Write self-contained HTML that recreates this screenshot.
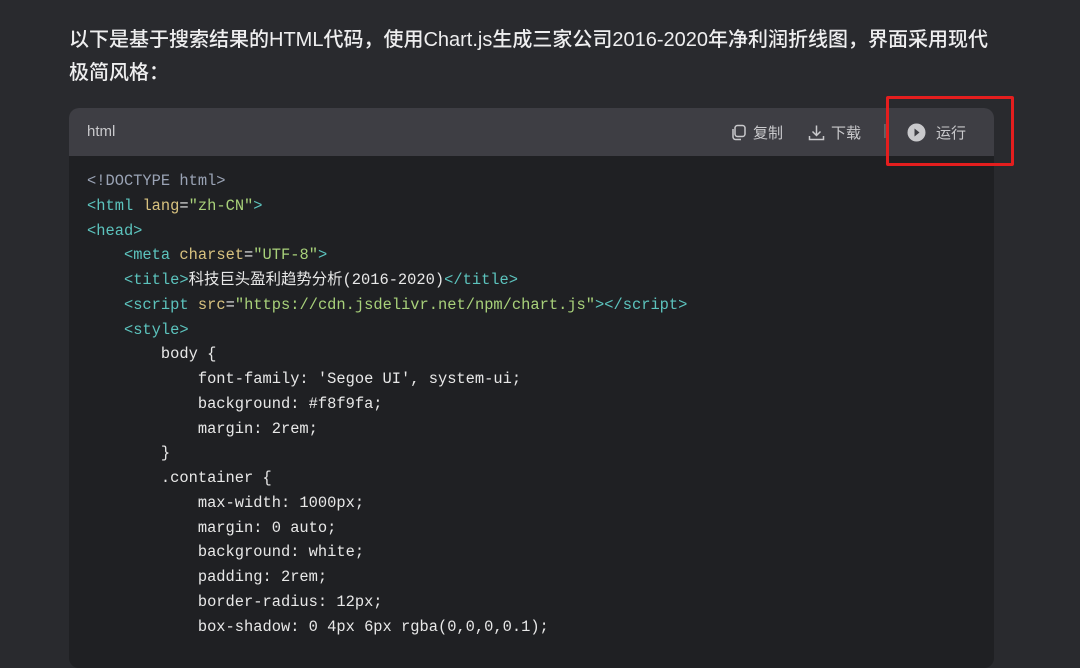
<!DOCTYPE html>
<html><head><meta charset="utf-8"><style>
body{margin:0;width:1080px;height:643px;overflow:hidden;background:#292a2e;font-family:"Liberation Sans","Noto Sans CJK SC",sans-serif;}
.t{position:absolute;left:69px;top:24px;width:940px;color:#eeeeef;font-size:20px;line-height:33px;font-weight:500;letter-spacing:0}
.box{position:absolute;left:69px;top:108px;width:925px;height:560px;background:#1f2023;border-radius:10px;overflow:hidden}
.hd{height:48px;background:#3e3e44;position:relative;color:#c9c9cc;font-size:15px}
.hd .l{position:absolute;left:18px;top:15px}
.act{position:absolute;top:14px;font-size:15px;color:#c9c9cc}
pre{margin:0;padding:13px 18px;font-family:"Liberation Mono","Noto Sans CJK SC",monospace;font-size:15.4px;line-height:24.75px;color:#e8e8e8}
.g{color:#9aa3b5}.k{color:#5cc3bd}.a{color:#d8c27f}.s{color:#a8d17a}
.red{position:absolute;left:886px;top:96px;width:122px;height:64px;border:3px solid #e41e1e;border-radius:2px}
</style></head><body>
<div class="t">以下是基于搜索结果的HTML代码，使用Chart.js生成三家公司2016-2020年净利润折线图，界面采用现代<br>极简风格：</div>
<div class="box">
<div class="hd"><span class="l">html</span>
<span class="act" style="left:661px"><svg width="17" height="17" viewBox="0 0 17 17" style="vertical-align:-3px;margin-right:6px"><rect x="5" y="1.5" width="10" height="11" rx="2.5" fill="none" stroke="#c9c9cc" stroke-width="1.5"/><path d="M3 5v8a2.5 2.5 0 0 0 2.5 2.5H11" fill="none" stroke="#c9c9cc" stroke-width="1.5"/></svg>复制</span>
<span class="act" style="left:739px"><svg width="17" height="17" viewBox="0 0 17 17" style="vertical-align:-3px;margin-right:6px"><path d="M8.5 1.5v10M4.5 7.5l4 4 4-4M1.5 12v3.5h14V12" fill="none" stroke="#c9c9cc" stroke-width="1.5"/></svg>下载</span>
<span class="act" style="left:814px;color:#777">|</span>
<span class="act" style="left:838px"><svg width="19" height="19" viewBox="0 0 19 19" style="vertical-align:-4px;margin-right:10px"><circle cx="9.5" cy="9.5" r="9" fill="#c9c9cc"/><path d="M7.5 5.5l5 4-5 4z" fill="#3e3e44"/></svg>运行</span>
</div>
<pre><span class="g">&lt;!DOCTYPE html&gt;</span>
<span class="k">&lt;html</span> <span class="a">lang</span>=<span class="s">"zh-CN"</span><span class="k">&gt;</span>
<span class="k">&lt;head&gt;</span>
    <span class="k">&lt;meta</span> <span class="a">charset</span>=<span class="s">"UTF-8"</span><span class="k">&gt;</span>
    <span class="k">&lt;title&gt;</span>科技巨头盈利趋势分析(2016-2020)<span class="k">&lt;/title&gt;</span>
    <span class="k">&lt;script</span> <span class="a">src</span>=<span class="s">"https://cdn.jsdelivr.net/npm/chart.js"</span><span class="k">&gt;&lt;/script&gt;</span>
    <span class="k">&lt;style&gt;</span>
        body {
            font-family: 'Segoe UI', system-ui;
            background: #f8f9fa;
            margin: 2rem;
        }
        .container {
            max-width: 1000px;
            margin: 0 auto;
            background: white;
            padding: 2rem;
            border-radius: 12px;
            box-shadow: 0 4px 6px rgba(0,0,0,0.1);
</pre>
</div>
<div class="red"></div>
</body></html>
